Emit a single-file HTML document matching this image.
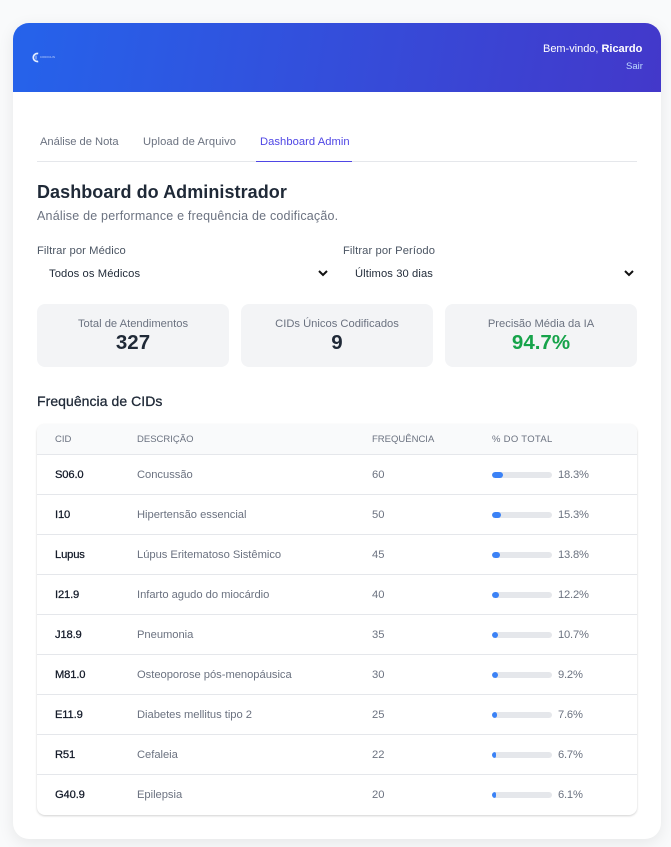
<!DOCTYPE html>
<html lang="pt-BR">
<head>
<meta charset="utf-8">
<title>Dashboard do Administrador</title>
<style>
*{box-sizing:border-box;margin:0;padding:0}
html,body{width:671px;height:847px;overflow:hidden;background:#f9fafb;font-family:"Liberation Sans",sans-serif}
.card{position:absolute;left:13px;top:23px;width:648px;height:816px;background:#fff;border-radius:16px;box-shadow:0 4px 16px rgba(0,0,0,.08);overflow:hidden}
.head{position:absolute;left:0;top:0;width:648px;height:69px;background:linear-gradient(100deg,#2563eb,#4338ca)}
.t{position:absolute;white-space:nowrap;line-height:16px}
.tabline{position:absolute;left:37px;top:161px;width:600px;height:1px;background:#e5e7eb}
.act{position:absolute;left:256px;top:161px;width:96px;height:1px;background:#4f46e5}
.stat{position:absolute;top:304px;width:192px;height:63px;background:#f3f4f6;border-radius:8px}
.stat .l{position:absolute;left:0;right:0;top:12px;text-align:center;font-size:11.2px;line-height:16px;color:#6b7280;white-space:nowrap}
.stat .v{position:absolute;left:0;right:0;top:27px;text-align:center;font-size:20.5px;line-height:24px;font-weight:700;color:#1f2937;white-space:nowrap}
.tbl{position:absolute;left:37px;top:424px;width:600px;height:391px;background:#fff;border-radius:8px;box-shadow:0 1px 2px rgba(0,0,0,.18);overflow:hidden}
.th{position:absolute;left:0;top:0;width:600px;height:31px;background:#f9fafb;border-bottom:1px solid #e5e7eb}
.th span{position:absolute;top:8px;font-size:9.5px;line-height:16px;color:#6b7280;letter-spacing:0;white-space:nowrap}
.r{position:absolute;left:0;width:600px;height:40px;border-bottom:1px solid #e5e7eb}
.r:last-child{border-bottom:0}
.r span{position:absolute;top:12px;line-height:16px;font-size:11.2px;white-space:nowrap;color:#6b7280}
.r .c{left:18px;color:#111827;letter-spacing:-.15px;-webkit-text-stroke:.25px #111827}
.r .d{left:100px;letter-spacing:-.03px}
.r .f{left:335px}
.r .p{left:521px;letter-spacing:-.2px}
.bar{position:absolute;left:455px;top:17px;width:60px;height:6px;background:#e5e7eb;border-radius:3px;overflow:hidden}
.bar i{display:block;height:6px;background:#3b82f6;border-radius:3px}
svg.ch{position:absolute}
</style>
</head>
<body>
<div class="card">
  <div class="head"></div>
</div>

<svg style="position:absolute;left:31px;top:52px" width="10" height="11" viewBox="0 0 10 11">
  <path d="M7.2 1.6A4 4 0 1 0 7.2 9.4" fill="none" stroke="#e6efff" stroke-width="1.7"/>
  <path d="M5 3.5v4" stroke="#bcd2fb" stroke-width="1"/>
</svg>
<span class="t" style="left:40px;top:50px;font-size:2.7px;letter-spacing:.1px;color:#c9dafb">CODOCLIN</span>

<span class="t" style="left:543px;top:41px;font-size:11px;color:#fff;letter-spacing:-.02px">Bem-vindo, <b>Ricardo</b></span>
<span class="t" style="left:626px;top:59px;font-size:9.5px;color:#bfdbfe">Sair</span>

<span class="t" style="left:40px;top:134px;font-size:11.2px;color:#6b7280;letter-spacing:-.03px">Análise de Nota</span>
<span class="t" style="left:143px;top:134px;font-size:11.2px;color:#6b7280;letter-spacing:.1px">Upload de Arquivo</span>
<span class="t" style="left:260px;top:134px;font-size:11.2px;color:#4f46e5;letter-spacing:.05px">Dashboard Admin</span>
<div class="tabline"></div>
<div class="act"></div>

<h1 class="t" style="left:37px;top:180px;font-size:18px;line-height:24px;font-weight:700;color:#1f2937;letter-spacing:.06px">Dashboard do Administrador</h1>
<span class="t" style="left:37px;top:208px;font-size:12.5px;color:#6b7280;letter-spacing:.2px">Análise de performance e frequência de codificação.</span>

<span class="t" style="left:37px;top:243px;font-size:11.2px;color:#4b5563;letter-spacing:.1px">Filtrar por Médico</span>
<span class="t" style="left:49px;top:266px;font-size:11.2px;color:#1f2937;letter-spacing:.1px">Todos os Médicos</span>
<svg class="ch" style="left:317px;top:268px" width="12" height="10" viewBox="0 0 12 10"><path d="M2 3l4 4 4-4" fill="none" stroke="#111" stroke-width="2"/></svg>

<span class="t" style="left:343px;top:243px;font-size:11.2px;color:#4b5563;letter-spacing:.1px">Filtrar por Período</span>
<span class="t" style="left:355px;top:266px;font-size:11.2px;color:#1f2937;letter-spacing:.1px">Últimos 30 dias</span>
<svg class="ch" style="left:623px;top:268px" width="12" height="10" viewBox="0 0 12 10"><path d="M2 3l4 4 4-4" fill="none" stroke="#111" stroke-width="2"/></svg>

<div class="stat" style="left:37px"><div class="l">Total de Atendimentos</div><div class="v">327</div></div>
<div class="stat" style="left:241px"><div class="l">CIDs Únicos Codificados</div><div class="v">9</div></div>
<div class="stat" style="left:445px"><div class="l">Precisão Média da IA</div><div class="v" style="color:#16a34a">94.7%</div></div>

<h2 class="t" style="left:37px;top:392px;font-size:14px;line-height:18px;font-weight:400;color:#1f2937;-webkit-text-stroke:.3px #1f2937;letter-spacing:.05px">Frequência de CIDs</h2>

<div class="tbl">
  <div class="th">
    <span style="left:18px">CID</span>
    <span style="left:100px">DESCRIÇÃO</span>
    <span style="left:335px">FREQUÊNCIA</span>
    <span style="left:455px;letter-spacing:.3px">% DO TOTAL</span>
  </div>
  <div class="r" style="top:31px"><span class="c">S06.0</span><span class="d">Concussão</span><span class="f">60</span><div class="bar"><i style="width:18.3%"></i></div><span class="p">18.3%</span></div>
  <div class="r" style="top:71px"><span class="c">I10</span><span class="d">Hipertensão essencial</span><span class="f">50</span><div class="bar"><i style="width:15.3%"></i></div><span class="p">15.3%</span></div>
  <div class="r" style="top:111px"><span class="c">Lupus</span><span class="d">Lúpus Eritematoso Sistêmico</span><span class="f">45</span><div class="bar"><i style="width:13.8%"></i></div><span class="p">13.8%</span></div>
  <div class="r" style="top:151px"><span class="c">I21.9</span><span class="d">Infarto agudo do miocárdio</span><span class="f">40</span><div class="bar"><i style="width:12.2%"></i></div><span class="p">12.2%</span></div>
  <div class="r" style="top:191px"><span class="c">J18.9</span><span class="d">Pneumonia</span><span class="f">35</span><div class="bar"><i style="width:10.7%"></i></div><span class="p">10.7%</span></div>
  <div class="r" style="top:231px"><span class="c">M81.0</span><span class="d">Osteoporose pós-menopáusica</span><span class="f">30</span><div class="bar"><i style="width:9.2%"></i></div><span class="p">9.2%</span></div>
  <div class="r" style="top:271px"><span class="c">E11.9</span><span class="d">Diabetes mellitus tipo 2</span><span class="f">25</span><div class="bar"><i style="width:7.6%"></i></div><span class="p">7.6%</span></div>
  <div class="r" style="top:311px"><span class="c">R51</span><span class="d">Cefaleia</span><span class="f">22</span><div class="bar"><i style="width:6.7%"></i></div><span class="p">6.7%</span></div>
  <div class="r" style="top:351px"><span class="c">G40.9</span><span class="d">Epilepsia</span><span class="f">20</span><div class="bar"><i style="width:6.1%"></i></div><span class="p">6.1%</span></div>
</div>
</body>
</html>
